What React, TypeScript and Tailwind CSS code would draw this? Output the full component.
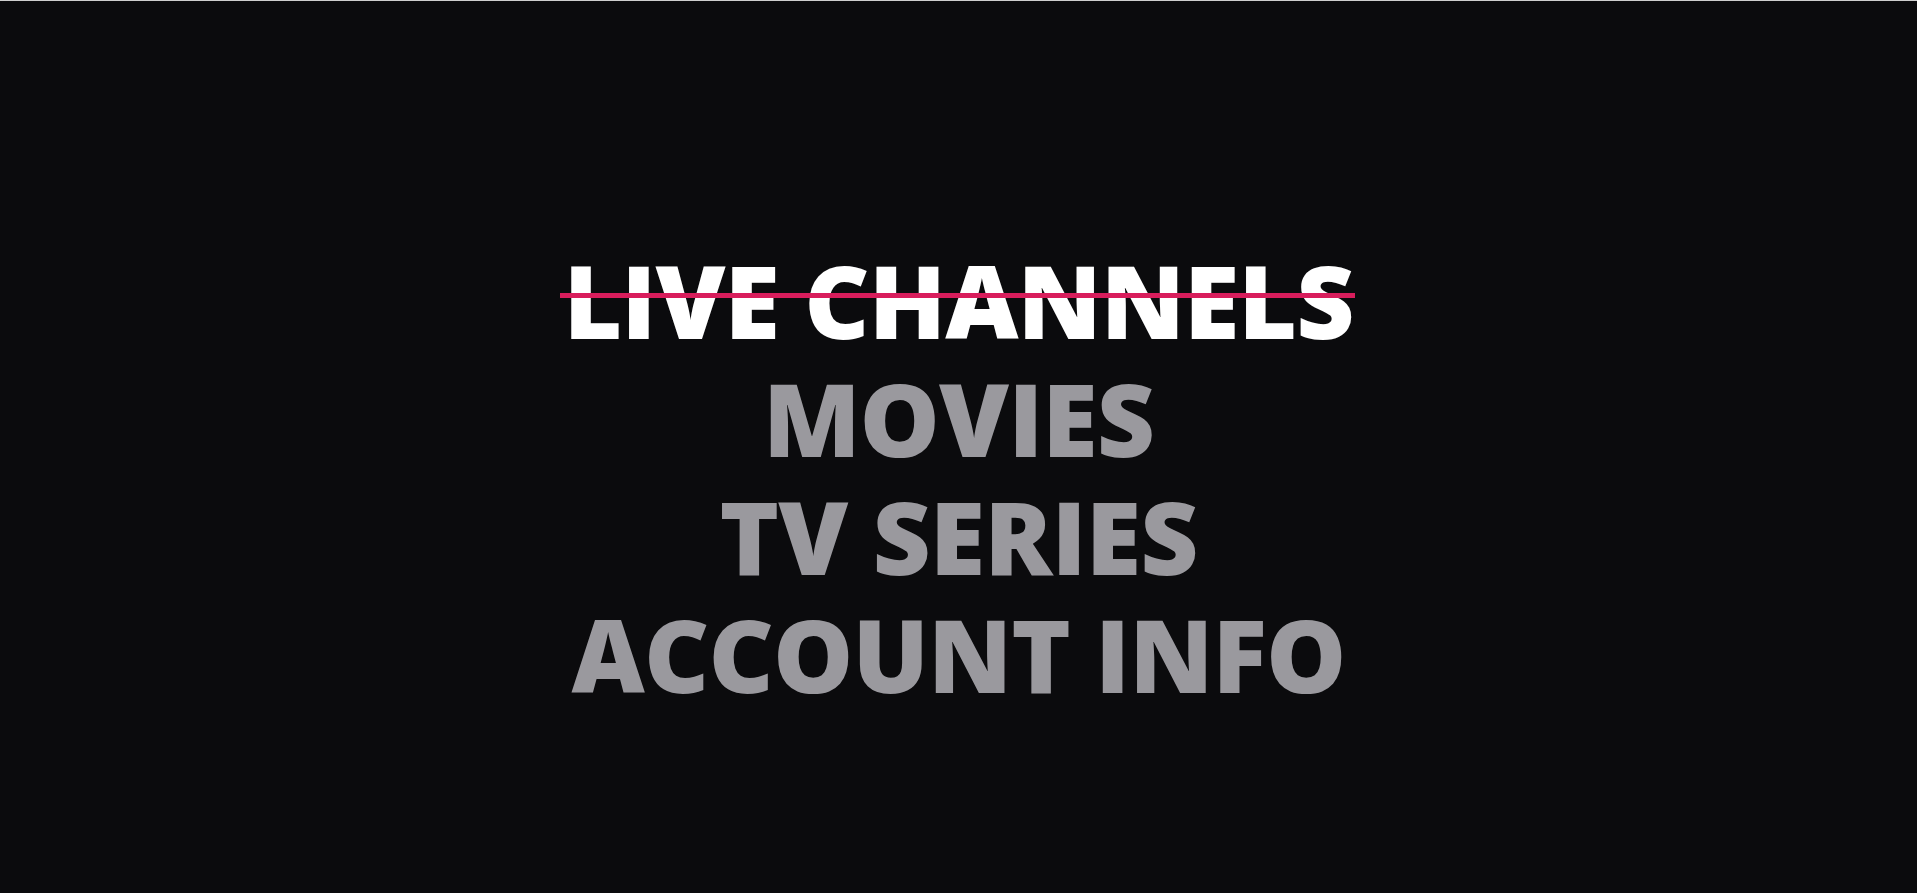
const items = [
  { label: "LIVE CHANNELS", active: true },
  { label: "MOVIES", active: false },
  { label: "TV SERIES", active: false },
  { label: "ACCOUNT INFO", active: false },
];

export default function App() {
  return (
    <div className="min-h-screen w-full border-t border-[#cfcfcf] bg-[#0b0b0d]">
      <nav
        className="flex flex-col items-center pt-[240px]"
        style={{ fontFamily: '"Open Sans", "Noto Sans", sans-serif' }}
      >
        {items.map((item) => (
          <div
            key={item.label}
            className={`relative text-[101px] leading-[118px] font-extrabold tracking-[-1px] ${
              item.active ? "text-white" : "text-[#9a999e]"
            }`}
          >
            {item.label}
            {item.active && (
              <span className="absolute left-[-4px] right-[-2px] top-[52px] h-[5px] bg-[#d81d5c]" />
            )}
          </div>
        ))}
      </nav>
    </div>
  );
}
